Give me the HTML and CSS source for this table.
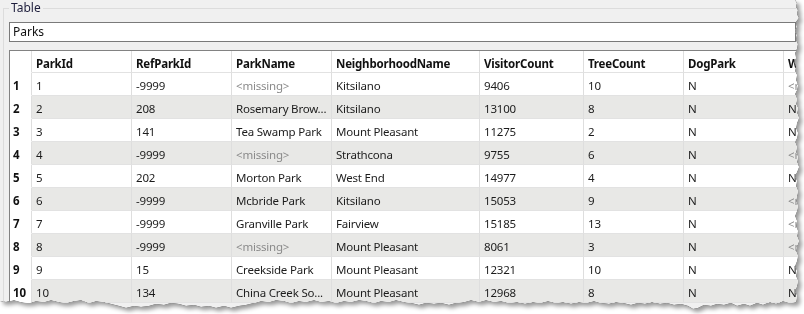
FILE: index.html
```html
<!DOCTYPE html>
<html>
<head>
<meta charset="utf-8">
<link rel="stylesheet" href="styles.css">
</head>
<body>
<div class="paper">
  <div class="sheet">
    <fieldset class="group">
      <legend class="group-title">Table</legend>
      <div class="field">Parks</div>
      <div class="grid">
        <div class="row head">
          <div class="cell rh"></div>
          <div class="cell">ParkId</div>
          <div class="cell">RefParkId</div>
          <div class="cell">ParkName</div>
          <div class="cell">NeighborhoodName</div>
          <div class="cell">VisitorCount</div>
          <div class="cell">TreeCount</div>
          <div class="cell">DogPark</div>
          <div class="cell">Washrooms</div>
        </div>
        <div class="row">
          <div class="cell rh">1</div><div class="cell">1</div><div class="cell">-9999</div><div class="cell miss">&lt;missing&gt;</div><div class="cell">Kitsilano</div><div class="cell">9406</div><div class="cell">10</div><div class="cell">N</div><div class="cell miss">&lt;missing&gt;</div>
        </div>
        <div class="row alt">
          <div class="cell rh">2</div><div class="cell">2</div><div class="cell">208</div><div class="cell">Rosemary Brow...</div><div class="cell">Kitsilano</div><div class="cell">13100</div><div class="cell">8</div><div class="cell">N</div><div class="cell">N</div>
        </div>
        <div class="row">
          <div class="cell rh">3</div><div class="cell">3</div><div class="cell">141</div><div class="cell">Tea Swamp Park</div><div class="cell">Mount Pleasant</div><div class="cell">11275</div><div class="cell">2</div><div class="cell">N</div><div class="cell">N</div>
        </div>
        <div class="row alt">
          <div class="cell rh">4</div><div class="cell">4</div><div class="cell">-9999</div><div class="cell miss">&lt;missing&gt;</div><div class="cell">Strathcona</div><div class="cell">9755</div><div class="cell">6</div><div class="cell">N</div><div class="cell miss">&lt;missing&gt;</div>
        </div>
        <div class="row">
          <div class="cell rh">5</div><div class="cell">5</div><div class="cell">202</div><div class="cell">Morton Park</div><div class="cell">West End</div><div class="cell">14977</div><div class="cell">4</div><div class="cell">N</div><div class="cell">N</div>
        </div>
        <div class="row alt">
          <div class="cell rh">6</div><div class="cell">6</div><div class="cell">-9999</div><div class="cell">Mcbride Park</div><div class="cell">Kitsilano</div><div class="cell">15053</div><div class="cell">9</div><div class="cell">N</div><div class="cell miss">&lt;missing&gt;</div>
        </div>
        <div class="row">
          <div class="cell rh">7</div><div class="cell">7</div><div class="cell">-9999</div><div class="cell">Granville Park</div><div class="cell">Fairview</div><div class="cell">15185</div><div class="cell">13</div><div class="cell">N</div><div class="cell miss">&lt;missing&gt;</div>
        </div>
        <div class="row alt">
          <div class="cell rh">8</div><div class="cell">8</div><div class="cell">-9999</div><div class="cell miss">&lt;missing&gt;</div><div class="cell">Mount Pleasant</div><div class="cell">8061</div><div class="cell">3</div><div class="cell">N</div><div class="cell miss">&lt;missing&gt;</div>
        </div>
        <div class="row">
          <div class="cell rh">9</div><div class="cell">9</div><div class="cell">15</div><div class="cell">Creekside Park</div><div class="cell">Mount Pleasant</div><div class="cell">12321</div><div class="cell">10</div><div class="cell">N</div><div class="cell">N</div>
        </div>
        <div class="row alt">
          <div class="cell rh">10</div><div class="cell">10</div><div class="cell">134</div><div class="cell">China Creek So...</div><div class="cell">Mount Pleasant</div><div class="cell">12968</div><div class="cell">8</div><div class="cell">N</div><div class="cell">N</div>
        </div>
      </div>
    </fieldset>
  </div>
</div>
</body>
</html>
```
FILE: styles.css
```css
* { box-sizing: border-box; }
html, body { margin: 0; padding: 0; background: #ffffff; }
body {
  width: 804px;
  height: 314px;
  overflow: hidden;
  font-family: "Noto Sans", "Open Sans", sans-serif;
  font-size: 11.5px;
  letter-spacing: -0.2px;
  color: #1c1c1c;
}
.paper {
  width: 804px;
  height: 314px;
  filter: drop-shadow(0 0 0.7px #000000) drop-shadow(3px 3px 2px rgba(0,0,0,0.4));
}
.sheet {
  width: 804px;
  height: 314px;
  background: #f0f0f0;
  overflow: hidden;
  clip-path: polygon(0 0, 795px 0, 797px 3px, 796px 7px, 798px 10px, 797px 14px, 799px 18px, 796px 22px, 797px 27px, 795px 31px, 797px 35px, 796px 40px, 798px 44px, 797px 49px, 795px 53px, 796px 58px, 794px 62px, 796px 66px, 795px 71px, 797px 75px, 796px 80px, 798px 85px, 797px 90px, 795px 94px, 797px 99px, 796px 104px, 798px 108px, 797px 113px, 799px 118px, 797px 123px, 796px 128px, 798px 133px, 797px 138px, 795px 142px, 797px 147px, 796px 152px, 798px 157px, 797px 162px, 799px 167px, 797px 172px, 795px 176px, 797px 181px, 796px 186px, 798px 191px, 797px 196px, 796px 201px, 798px 206px, 797px 211px, 795px 216px, 797px 221px, 796px 226px, 798px 231px, 797px 236px, 799px 241px, 797px 246px, 796px 251px, 798px 256px, 797px 261px, 795px 266px, 797px 271px, 796px 276px, 798px 281px, 797px 286px, 795px 291px, 797px 296px, 796px 302px, 790px 303px, 783px 301px, 776px 304px, 770px 302px, 763px 305px, 757px 303px, 750px 306px, 744px 304px, 737px 306px, 731px 303px, 724px 305px, 717px 304px, 711px 306px, 704px 305px, 698px 308px, 693px 309px, 688px 306px, 681px 304px, 674px 305px, 667px 303px, 660px 304px, 652px 302px, 645px 304px, 638px 303px, 631px 305px, 623px 303px, 616px 302px, 609px 304px, 601px 303px, 594px 301px, 586px 303px, 579px 302px, 571px 304px, 563px 302px, 556px 303px, 548px 301px, 540px 303px, 533px 302px, 525px 304px, 517px 302px, 509px 303px, 501px 301px, 494px 302px, 486px 300px, 479px 302px, 471px 300px, 464px 302px, 456px 303px, 449px 305px, 441px 303px, 434px 304px, 426px 303px, 419px 305px, 411px 303px, 404px 302px, 396px 300px, 389px 302px, 381px 301px, 374px 303px, 366px 301px, 359px 300px, 351px 302px, 344px 301px, 336px 303px, 329px 301px, 321px 302px, 314px 300px, 306px 302px, 299px 301px, 291px 303px, 284px 301px, 276px 300px, 269px 302px, 261px 301px, 254px 303px, 246px 305px, 239px 306px, 231px 308px, 224px 306px, 216px 308px, 209px 306px, 201px 307px, 194px 305px, 186px 306px, 179px 304px, 171px 303px, 164px 305px, 156px 304px, 149px 306px, 141px 307px, 134px 306px, 126px 308px, 119px 306px, 111px 304px, 104px 302px, 96px 301px, 89px 303px, 81px 300px, 74px 301px, 66px 303px, 59px 302px, 51px 300px, 44px 302px, 36px 301px, 29px 303px, 21px 302px, 14px 300px, 6px 302px, 0 301px);
}
.group {
  margin: 0 0 0 3px;
  padding: 6px 5px 0 5px;
  width: 805px;
  height: 330px;
  min-width: 0;
  border: 1px solid #dcdcdc;
}
.group-title {
  padding: 0 2px;
  font-size: 12px;
  line-height: 16px;
  letter-spacing: 0;
  color: #1e1e3c;
}
.field {
  width: 787px;
  height: 20px;
  border: 1px solid #7a7a7a;
  background: #ffffff;
  padding: 0 3px;
  font-size: 12px;
  letter-spacing: 0;
  line-height: 18px;
  color: #111111;
}
.grid {
  margin-top: 8px;
  width: 795px;
  background: #ffffff;
  border-top: 1px solid #828282;
  border-left: 1px solid #828282;
  overflow: hidden;
}
.row {
  display: grid;
  grid-template-columns: 22px 100px 100px 100px 148px 104px 100px 100px 140px;
  height: 23px;
}
.row.head { height: 22px; font-weight: 700; color: #111111; }
.cell {
  border-right: 1px solid #dedede;
  border-bottom: 1px solid #e2e2e2;
  padding: 4px 4px 0 4px;
  line-height: 18px;
  white-space: nowrap;
  overflow: hidden;
}
.row.alt .cell { background: #e8e8e6; }
.row .cell.rh {
  background: #ffffff;
  font-weight: 700;
  color: #111111;
  padding: 4px 2px 0 3px;
  letter-spacing: 0;
  border-bottom-color: #ffffff;
}
.cell.miss { color: #8a8a8a; }
```
